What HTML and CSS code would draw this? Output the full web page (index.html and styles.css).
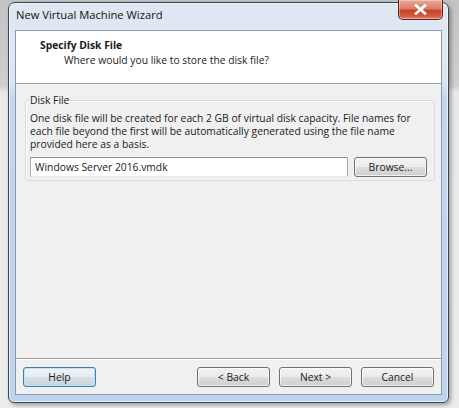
FILE: index.html
```html
<!DOCTYPE html>
<html>
<head>
<meta charset="utf-8">
<title>New Virtual Machine Wizard</title>
<link rel="stylesheet" href="styles.css">
</head>
<body>
<div class="desktop">
  <div class="window">
    <div class="titlebar">
      <span class="title">New Virtual Machine Wizard</span>
      <button class="close" aria-label="Close">
        <svg width="13" height="11" viewBox="0 0 13 11"><path d="M2 1.5 L11 9.5 M11 1.5 L2 9.5" stroke="#fff" stroke-width="2.6" stroke-linecap="square" fill="none"/><path d="M2 1.5 L11 9.5 M11 1.5 L2 9.5" stroke="#fff" stroke-width="1.8" fill="none"/></svg>
      </button>
    </div>
    <div class="client">
      <div class="header">
        <div class="h-title">Specify Disk File</div>
        <div class="h-sub">Where would you like to store the disk file?</div>
      </div>
      <div class="content">
        <fieldset class="group">
          <legend>Disk File</legend>
          <p class="desc">One disk file will be created for each 2 GB of virtual disk capacity. File names for each file beyond the first will be automatically generated using the file name provided here as a basis.</p>
          <div class="row">
            <input class="path" type="text" value="Windows Server 2016.vmdk">
            <button class="btn browse">Browse...</button>
          </div>
        </fieldset>
      </div>
      <div class="footer">
        <button class="btn default">Help</button>
        <div class="spacer"></div>
        <button class="btn">&lt; Back</button>
        <button class="btn">Next &gt;</button>
        <button class="btn">Cancel</button>
      </div>
    </div>
  </div>
</div>
</body>
</html>
```
FILE: styles.css
```css
html, body {
  margin: 0;
  padding: 0;
}
body {
  width: 459px;
  height: 408px;
  overflow: hidden;
  font-family: "Open Sans", "Liberation Sans", sans-serif;
  font-size: 10.3px;
  color: #1a1a1a;
}
.desktop {
  width: 459px;
  height: 408px;
  padding: 2px 0 0 8px;
  box-sizing: border-box;
  background: linear-gradient(to bottom, #c3c3c3 0, #cfcfcf 86px, #e9e9e9 92px, #ececec 100%);
}
.window {
  width: 441px;
  height: 401px;
  box-sizing: border-box;
  border: 1px solid #3a4656;
  border-radius: 7px 7px 6px 6px;
  padding: 0 6px 7px 6px;
  display: flex;
  flex-direction: column;
  background: linear-gradient(to bottom, #dfe8f2 0, #dde7f1 78px, #c2d7ee 96px, #bdd4ed 100%);
  box-shadow: inset 0 0 0 1px rgba(255,255,255,0.6), 2px 2px 4px rgba(0,0,0,0.35);
}
.titlebar {
  height: 27px;
  display: flex;
  align-items: flex-start;
}
.title {
  margin-top: 4px;
  margin-left: 1px;
  font-size: 11.2px;
  color: #111;
}
.close {
  margin-left: auto;
  margin-right: -1px;
  margin-top: -3px;
  width: 45px;
  height: 20px;
  padding: 0;
  border: 1px solid #5b2418;
  border-top: none;
  border-radius: 0 0 5px 5px;
  background: linear-gradient(to bottom, #e9a99b 0, #dc7d68 45%, #c7432b 55%, #d35a3e 85%, #e08a6c 100%);
  box-shadow: inset 0 0 0 1px rgba(255,255,255,0.35);
  display: flex;
  align-items: center;
  justify-content: center;
}
.client {
  flex: 1;
  display: flex;
  flex-direction: column;
  border: 1px solid #8a9ab0;
  background: #f0f0f0;
}
.header {
  background: #fff;
  border-bottom: 1px solid #a0a0a0;
  box-sizing: border-box;
  height: 53px;
  padding: 7px 0 0 24px;
}
.h-title {
  font-weight: 700;
  font-size: 10.3px;
  line-height: 14px;
}
.h-sub {
  margin-top: 1px;
  padding-left: 24px;
  line-height: 14px;
}
.content {
  padding: 10px 8px 0 9px;
  flex: 1;
}
.group {
  margin: 0;
  border: 1px solid #d5dfe5;
  border-radius: 3px;
  padding: 0 7px 3px 4px;
  box-shadow: inset 1px 1px 0 #fff;
}
.group legend {
  padding: 0;
  line-height: 13px;
  margin-left: 0;
}
.desc {
  margin: 5px 0 6px 0;
  line-height: 13px;
  padding-right: 10px;
}
.row {
  display: flex;
  gap: 6px;
}
.path {
  width: 318px;
  height: 20px;
  box-sizing: border-box;
  border: 1px solid #abadb3;
  border-top-color: #8e8f8f;
  border-bottom-color: #e3e9ef;
  padding: 0 0 0 4px;
  margin: 0;
  font-family: inherit;
  font-size: 10.3px;
  color: #1a1a1a;
  background: #fff;
  outline: none;
}
.btn {
  height: 20px;
  width: 73px;
  box-sizing: border-box;
  border: 1px solid #707070;
  border-radius: 3px;
  background: linear-gradient(to bottom, #f2f2f2 0, #ebebeb 50%, #dddddd 50%, #cfcfcf 100%);
  box-shadow: inset 0 0 0 1px rgba(255,255,255,0.7);
  font-family: inherit;
  font-size: 10.3px;
  color: #1a1a1a;
  padding: 0;
  margin: 0;
}
.browse {
  width: 73px;
}
.footer {
  display: flex;
  gap: 9px;
  border-top: 1px solid #a0a0a0;
  box-shadow: inset 0 1px 0 #fff;
  padding: 8px 7px 7px 7px;
}
.spacer {
  flex: 1;
}
.default {
  border-color: #3c7fb1;
  background: linear-gradient(to bottom, #eef3f7 0, #e6ecf1 50%, #d7dfe6 50%, #cbd5de 100%);
  box-shadow: inset 0 0 0 1px #bfe2f6;
}
```
